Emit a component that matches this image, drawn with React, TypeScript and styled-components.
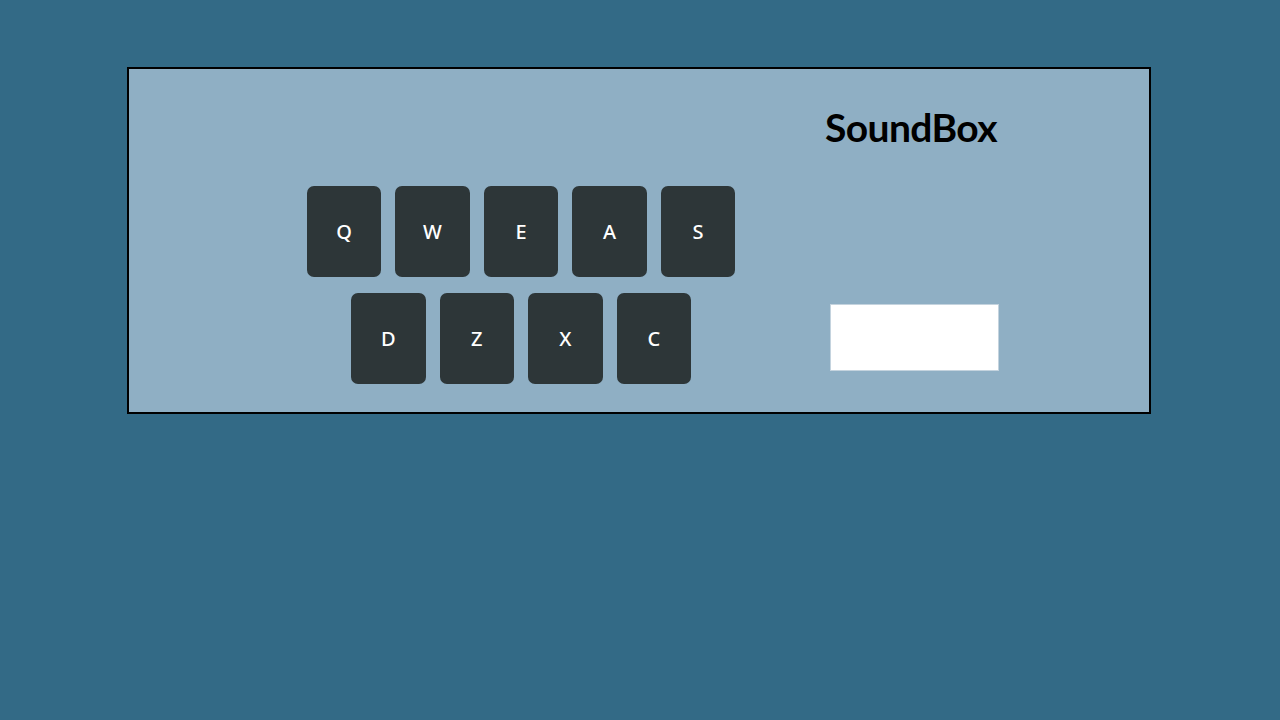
import React from "react";
import styled, { createGlobalStyle } from "styled-components";

const Global = createGlobalStyle`
  html, body {
    margin: 0;
    padding: 0;
    background: #336a86;
    font-family: "Noto Sans", "DejaVu Sans", sans-serif;
  }
  #root { min-height: 720px; overflow: hidden; }
`;

const Frame = styled.div`
  box-sizing: border-box;
  width: 1024px;
  height: 347px;
  margin: 67px 0 0 127px;
  border: 2px solid #000;
  background: #8fafc4;
  display: flex;
  align-items: flex-start;
`;

const Keypad = styled.div`
  width: 432px;
  margin: 117px 0 0 176px;
  display: flex;
  flex-wrap: wrap;
  justify-content: center;
  column-gap: 14px;
  row-gap: 16px;
`;

const Key = styled.button`
  box-sizing: border-box;
  width: 74.5px;
  height: 91px;
  border: none;
  border-radius: 7px;
  background: #2d3638;
  color: #fff;
  font-family: "Noto Sans", "DejaVu Sans", sans-serif;
  font-size: 20px;
  font-weight: 500;
  display: flex;
  align-items: center;
  justify-content: center;
  padding: 0;
  cursor: pointer;
`;

const Side = styled.div`
  width: 168px;
  margin-left: 93px;
  display: flex;
  flex-direction: column;
  align-items: center;
`;

const Title = styled.h1`
  margin: 35px 0 0;
  font-family: Lato, "Noto Sans", sans-serif;
  font-weight: 700;
  font-size: 39px;
  line-height: 47px;
  color: #000;
  letter-spacing: -0.6px;
  white-space: nowrap;
  transform: translateX(-3px);
`;

const Display = styled.div`
  box-sizing: border-box;
  width: 169px;
  height: 67px;
  margin-top: 153px;
  background: #fff;
  border: 1px solid #c4d3de;
`;

const keys = ["Q", "W", "E", "A", "S", "D", "Z", "X", "C"];

export default function App() {
  return (
    <>
      <Global />
      <Frame>
        <Keypad>
          {keys.map((k) => (
            <Key key={k}>{k}</Key>
          ))}
        </Keypad>
        <Side>
          <Title>SoundBox</Title>
          <Display />
        </Side>
      </Frame>
    </>
  );
}
